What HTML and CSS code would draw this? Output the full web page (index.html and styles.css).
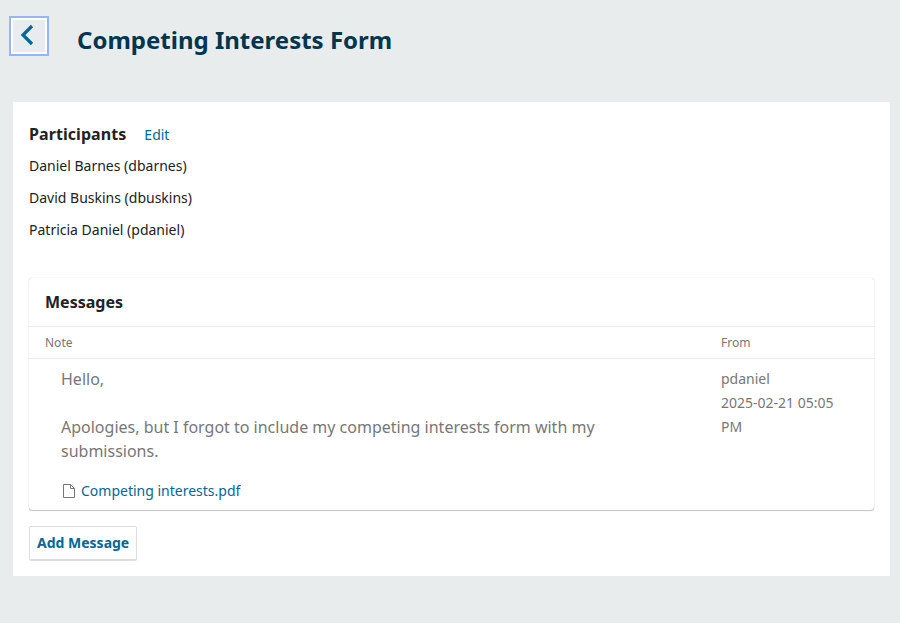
FILE: index.html
```html
<!DOCTYPE html>
<html lang="en">
<head>
<meta charset="utf-8">
<title>Competing Interests Form</title>
<link rel="stylesheet" href="styles.css">
</head>
<body>
<header class="header">
  <button class="back" aria-label="Back"><svg width="14" height="22" viewBox="0 0 14 22"><path d="M12 2 3 11l9 9" fill="none" stroke="#006798" stroke-width="3.2"/></svg></button>
  <h1 class="title">Competing Interests Form</h1>
</header>
<main class="panel">
  <section>
    <div class="participants-head"><h2 class="heading">Participants</h2><a class="link">Edit</a></div>
    <ul class="participants">
      <li>Daniel Barnes (dbarnes)</li>
      <li>David Buskins (dbuskins)</li>
      <li>Patricia Daniel (pdaniel)</li>
    </ul>
  </section>
  <section class="messages">
    <div class="messages-head"><h2 class="heading">Messages</h2></div>
    <div class="row labels"><span>Note</span><span>From</span></div>
    <div class="row message">
      <div class="note">
        <p>Hello,</p>
        <p>Apologies, but I forgot to include my competing interests form with my submissions.</p>
        <a class="file link"><svg width="12" height="14" viewBox="0 0 12 14"><path d="M.5.5h7l4 4v9H.5zM7.5.5v4h4" fill="none" stroke="#777"/></svg>Competing interests.pdf</a>
      </div>
      <div class="from">pdaniel<br>2025-02-21 05:05 PM</div>
    </div>
  </section>
  <button class="add">Add Message</button>
</main>
</body>
</html>
```
FILE: styles.css
```css
* { box-sizing: border-box; }
body { margin: 0; background: #e9eced; color: #222; font: 14px/24px "Noto Sans", sans-serif; }
h1, h2, p, ul { margin: 0; padding: 0; }
button { font-family: inherit; }
.header { display: flex; height: 102px; padding: 16px 0 0 9px; align-items: flex-start; }
.back { width: 40px; height: 40px; padding: 0 4px 2px 0; border: 2px solid #94b6fa; background: #e9eced; box-shadow: inset 0 0 0 2px #fff; display: flex; align-items: center; justify-content: center; }
.title { margin: 8px 0 0 28px; font-size: 24px; line-height: 32px; color: #00354f; }
.panel { margin: 0 10px 0 13px; height: 474px; padding: 16px 15px 0 16px; background: #fff; }
.participants-head { display: flex; align-items: center; height: 32px; }
.heading { font-size: 16px; line-height: 24px; }
.participants-head .heading { letter-spacing: .07px; }
.link { color: #006798; }
.participants-head .link { margin: 2px 0 0 18px; }
.participants { list-style: none; line-height: 32px; }
.messages { margin: 32px 1px 0 0; height: 232px; border-radius: 3px; box-shadow: 0 0 1px rgba(0,0,0,.3), 0 1px 1px rgba(0,0,0,.22); }
.messages-head { height: 49px; padding: 12px 16px; border-bottom: 1px solid #eaedee; }
.row { display: grid; grid-template-columns: 692px 1fr; }
.labels { height: 32px; padding-left: 16px; grid-template-columns: 676px 1fr; font-size: 12px; line-height: 32px; color: #777; border-bottom: 1px solid #eaedee; }
.message { color: #777; }
.note { padding: 8px 80px 0 32px; font-size: 16px; }
.note p + p { margin-top: 24px; }
.file { display: flex; align-items: center; gap: 6px; margin-top: 16px; padding-left: 2px; font-size: 14px; }
.from { padding: 8px 31px 0 0; }
.add { display: block; margin-top: 16px; height: 35px; padding: 0 7px 1px; border: 1px solid #ddd; border-bottom-width: 2px; border-radius: 2px; background: #fff; color: #006798; font-weight: 700; font-size: 14px; }
```
